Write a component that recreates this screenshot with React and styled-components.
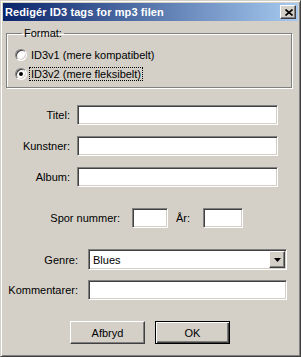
import React from "react";
import styled, { createGlobalStyle } from "styled-components";

const GlobalStyle = createGlobalStyle`
  html, body {
    margin: 0;
    padding: 0;
    background: #d4d0c8;
  }
  * {
    box-sizing: border-box;
  }
`;

const Window = styled.div`
  width: 301px;
  height: 357px;
  background: #d4d0c8;
  border: 1px solid;
  border-color: #d4d0c8 #404040 #404040 #d4d0c8;
  box-shadow: inset 1px 1px #fff, inset -1px -1px #808080;
  padding: 2px;
  font-family: "Liberation Sans", Arial, sans-serif;
  font-size: 11px;
  color: #000;
  display: flex;
  flex-direction: column;
`;

const TitleBar = styled.div`
  height: 18px;
  display: flex;
  align-items: center;
  justify-content: space-between;
  padding: 0 2px 0 2px;
  background: linear-gradient(to right, #0a246a, #a6caf0);
`;

const Title = styled.span`
  color: #fff;
  font-weight: bold;
  font-size: 11px;
  letter-spacing: 0.1px;
`;

const raised = `
  border: 1px solid;
  border-color: #fff #404040 #404040 #fff;
  box-shadow: inset -1px -1px #808080, inset 1px 1px #d4d0c8;
  background: #d4d0c8;
`;

const sunken = `
  border: 1px solid;
  border-color: #808080 #fff #fff #808080;
  box-shadow: inset 1px 1px #404040, inset -1px -1px #d4d0c8;
  background: #fff;
`;

const CloseButton = styled.div`
  ${raised}
  width: 16px;
  height: 14px;
  display: flex;
  align-items: center;
  justify-content: center;
  padding-left: 1px;
`;

const Body = styled.div`
  display: flex;
  flex-direction: column;
  padding: 6px 6px 0 3px;
`;

const Group = styled.fieldset`
  margin: 0;
  padding: 6px 8px 4px 8px;
  border: 1px solid #808080;
  box-shadow: inset 1px 1px #fff, 1px 1px #fff;
  display: flex;
  flex-direction: column;
`;

const Legend = styled.legend`
  padding: 0 2px;
  margin-left: 7px;
  line-height: 12px;
`;

const RadioRow = styled.div`
  height: 19px;
  display: flex;
  align-items: center;
  gap: 2px;
`;

const RadioCircle = styled.span`
  width: 12px;
  height: 12px;
  border-radius: 50%;
  border: 1px solid;
  border-color: #808080 #fff #fff #808080;
  box-shadow: inset 1px 1px #404040, inset -1px -1px #d4d0c8;
  background: #fff;
  display: flex;
  align-items: center;
  justify-content: center;
  flex: none;
`;

const Dot = styled.span`
  width: 4px;
  height: 4px;
  border-radius: 50%;
  background: #000;
`;

const RadioLabel = styled.span`
  border: 1px dotted ${(p) => (p.$focus ? "#000" : "transparent")};
  padding: 0 1px;
  line-height: 12px;
`;

const Fields = styled.div`
  display: flex;
  flex-direction: column;
  gap: ${(p) => p.$gap}px;
  margin-top: ${(p) => p.$top}px;
`;

const Row = styled.div`
  display: flex;
  align-items: center;
  height: ${(p) => p.$h || 20}px;
`;

const Label = styled.span`
  width: ${(p) => p.$w}px;
  margin-right: ${(p) => p.$gap}px;
  text-align: right;
  white-space: nowrap;
  flex: none;
`;

const TextBox = styled.div`
  ${sunken}
  width: ${(p) => p.$w}px;
  height: 20px;
  flex: none;
`;

const Combo = styled.div`
  ${sunken}
  width: ${(p) => p.$w}px;
  height: 21px;
  display: flex;
  align-items: center;
  justify-content: space-between;
  padding: 2px 1px 2px 4px;
  flex: none;
`;

const DropButton = styled.div`
  ${raised}
  width: 16px;
  height: 17px;
  display: flex;
  align-items: center;
  justify-content: center;
`;

const Buttons = styled.div`
  display: flex;
  gap: 10px;
  margin-top: 21px;
  padding-left: 64px;
`;

const Button = styled.div`
  width: 75px;
  height: 23px;
  display: flex;
  align-items: center;
  justify-content: center;
  ${raised}
  ${(p) =>
    p.$default &&
    `
    border: 1px solid #000;
    box-shadow: inset 1px 1px #fff, inset -1px -1px #404040, inset -2px -2px #808080;
  `}
`;

export default function App() {
  return (
    <>
      <GlobalStyle />
      <Window>
        <TitleBar>
          <Title>Redigér ID3 tags for mp3 filen</Title>
          <CloseButton>
            <svg width="8" height="7" viewBox="0 0 8 7">
              <path d="M0.5 0.5 L7.5 6.5 M7.5 0.5 L0.5 6.5" stroke="#000" strokeWidth="1.6" />
            </svg>
          </CloseButton>
        </TitleBar>
        <Body>
          <Group>
            <Legend>Format:</Legend>
            <RadioRow>
              <RadioCircle />
              <RadioLabel>ID3v1 (mere kompatibelt)</RadioLabel>
            </RadioRow>
            <RadioRow>
              <RadioCircle>
                <Dot />
              </RadioCircle>
              <RadioLabel $focus>ID3v2 (mere fleksibelt)</RadioLabel>
            </RadioRow>
          </Group>

          <Fields $gap={11} $top={17}>
            <Row>
              <Label $w={64} $gap={7}>Titel:</Label>
              <TextBox $w={201} />
            </Row>
            <Row>
              <Label $w={64} $gap={7}>Kunstner:</Label>
              <TextBox $w={201} />
            </Row>
            <Row>
              <Label $w={64} $gap={7}>Album:</Label>
              <TextBox $w={201} />
            </Row>
          </Fields>

          <Fields $gap={0} $top={21}>
            <Row>
              <Label $w={114} $gap={12}>Spor nummer:</Label>
              <TextBox $w={36} />
              <Label $w={22} $gap={13}>År:</Label>
              <TextBox $w={40} />
            </Row>
          </Fields>

          <Fields $gap={10} $top={21}>
            <Row $h={21}>
              <Label $w={72} $gap={10}>Genre:</Label>
              <Combo $w={199}>
                <span>Blues</span>
                <DropButton>
                  <svg width="7" height="4" viewBox="0 0 7 4">
                    <path d="M0 0 H7 L3.5 4 Z" fill="#000" />
                  </svg>
                </DropButton>
              </Combo>
            </Row>
            <Row>
              <Label $w={72} $gap={10}>Kommentarer:</Label>
              <TextBox $w={199} />
            </Row>
          </Fields>

          <Buttons>
            <Button>Afbryd</Button>
            <Button $default>OK</Button>
          </Buttons>
        </Body>
      </Window>
    </>
  );
}
